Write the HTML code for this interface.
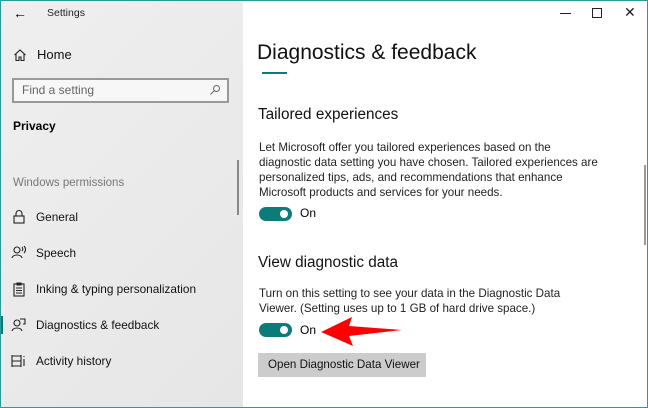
<!DOCTYPE html>
<html><head><meta charset="utf-8"><style>
*{margin:0;padding:0;box-sizing:border-box}
body{width:648px;height:408px;overflow:hidden;font-family:"Liberation Sans",sans-serif;color:#000;background:#fff;position:relative}
.a{position:absolute;white-space:nowrap}
#side{position:absolute;left:0;top:0;width:243px;height:408px;background:linear-gradient(135deg,#efefef,#e6e6e6)}
#frame{position:absolute;left:0;top:0;width:648px;height:408px;border:1px solid #2a9a9a;pointer-events:none}
.nav{font-size:11.8px;color:#111}
p.t{font-size:11.6px;line-height:15px;color:#222}
.tog{position:absolute;width:33px;height:14px;border-radius:7px;background:#0e7b7b}
.tog:after{content:"";position:absolute;right:4px;top:3px;width:8px;height:8px;border-radius:50%;background:#fff}
</style></head><body>
<div id="side"></div>
<div class="a" style="left:13px;top:5px;font-size:14px">&#8592;</div>
<div class="a" style="left:47px;top:7px;font-size:10.5px;color:#222">Settings</div>
<svg class="a" style="left:13px;top:48px" width="14" height="14" viewBox="0 0 14 14" fill="none" stroke="#222" stroke-width="1.1"><path d="M1.5 7 7 2l5.5 5M3 6v6.5h3V9h2v3.5h3V6"/></svg>
<div class="a nav" style="left:37px;top:47px;font-size:13px">Home</div>
<div class="a" style="left:12px;top:78px;width:217px;height:25px;border:2px solid #999;background:#f7f7f7"></div>
<div class="a" style="left:22px;top:83px;font-size:12px;color:#666">Find a setting</div>
<svg class="a" style="left:209px;top:84px" width="12" height="12" viewBox="0 0 12 12" fill="none" stroke="#666" stroke-width="1"><circle cx="7.5" cy="4.5" r="3"/><path d="M5.3 6.7 1.5 10.5"/></svg>
<div class="a" style="left:13px;top:119px;font-size:12px;font-weight:bold">Privacy</div>
<div class="a" style="left:13px;top:177px;font-size:11.5px;color:#777">Windows permissions</div>
<svg class="a" style="left:12px;top:209px" width="14" height="16" viewBox="0 0 14 16" fill="none" stroke="#222" stroke-width="1.1"><rect x="2" y="7" width="10" height="7"/><path d="M4 7V4.5a3 3 0 0 1 6 0V7"/></svg>
<div class="a nav" style="left:36px;top:210px">General</div>
<svg class="a" style="left:11px;top:245px" width="16" height="16" viewBox="0 0 16 16" fill="none" stroke="#222" stroke-width="1.1"><circle cx="6" cy="5" r="3"/><path d="M1 13c1-4 9-4 10 0M11 2c1 1 1 3 0 4M13 1c2 2 2 5 0 7"/></svg>
<div class="a nav" style="left:36px;top:246px">Speech</div>
<svg class="a" style="left:12px;top:281px" width="14" height="16" viewBox="0 0 14 16" fill="none" stroke="#222" stroke-width="1.1"><rect x="2" y="3" width="10" height="12"/><path d="M5 2h4v2H5zM4 7h6M4 9.5h6M4 12h6"/></svg>
<div class="a nav" style="left:36px;top:282px">Inking &amp; typing personalization</div>
<div class="a" style="left:0;top:316px;width:3px;height:18px;background:#0e7b7b"></div>
<svg class="a" style="left:11px;top:317px" width="16" height="16" viewBox="0 0 16 16" fill="none" stroke="#222" stroke-width="1.1"><circle cx="6" cy="6" r="3"/><path d="M1 14c1-4 9-4 10 0M9 2h5v5h-2"/></svg>
<div class="a nav" style="left:36px;top:318px">Diagnostics &amp; feedback</div>
<svg class="a" style="left:11px;top:353px" width="16" height="16" viewBox="0 0 16 16" fill="none" stroke="#222" stroke-width="1.1"><path d="M1 2v12M10 2v12M1 3h9M1 13h9M1 8h9M13 3v1M13 6v7"/></svg>
<div class="a nav" style="left:36px;top:354px">Activity history</div>
<div class="a" style="left:237px;top:160px;width:2px;height:55px;background:#888"></div>
<div class="a" style="left:644px;top:165px;width:2px;height:80px;background:#999"></div>
<div class="a" style="left:560px;top:13px;width:11px;height:1px;background:#222"></div>
<div class="a" style="left:592px;top:8px;width:10px;height:10px;border:1px solid #222"></div>
<div class="a" style="left:624px;top:4px;font-size:14px;color:#222">✕</div>
<div class="a" style="left:257px;top:41px;font-size:21px;font-weight:300;color:#111">Diagnostics &amp; feedback</div>
<div class="a" style="left:262px;top:72px;width:25px;height:2px;background:#0e7b7b"></div>
<div class="a" style="left:258px;top:106px;font-size:15.3px;color:#111">Tailored experiences</div>
<p class="a t" style="left:259px;top:140px">Let Microsoft offer you tailored experiences based on the<br>diagnostic data setting you have chosen. Tailored experiences are<br>personalized tips, ads, and recommendations that enhance<br>Microsoft products and services for your needs.</p>
<div class="tog" style="left:259px;top:207px"></div>
<div class="a" style="left:300px;top:206px;font-size:12px">On</div>
<div class="a" style="left:258px;top:254px;font-size:15.3px;color:#111">View diagnostic data</div>
<p class="a t" style="left:259px;top:286px">Turn on this setting to see your data in the Diagnostic Data<br>Viewer. (Setting uses up to 1 GB of hard drive space.)</p>
<div class="tog" style="left:259px;top:323px"></div>
<div class="a" style="left:300px;top:323px;font-size:12px">On</div>
<svg class="a" style="left:318px;top:314px" width="90" height="36"><polygon points="3,18 34,3 31,12 84,16 31,22 35,32" fill="#f00"/></svg>
<div class="a" style="left:258px;top:353px;width:168px;height:24px;background:#ccc"></div>
<div class="a" style="left:268px;top:358px;font-size:11.6px;color:#111">Open Diagnostic Data Viewer</div>
<div id="frame"></div>
</body></html>
